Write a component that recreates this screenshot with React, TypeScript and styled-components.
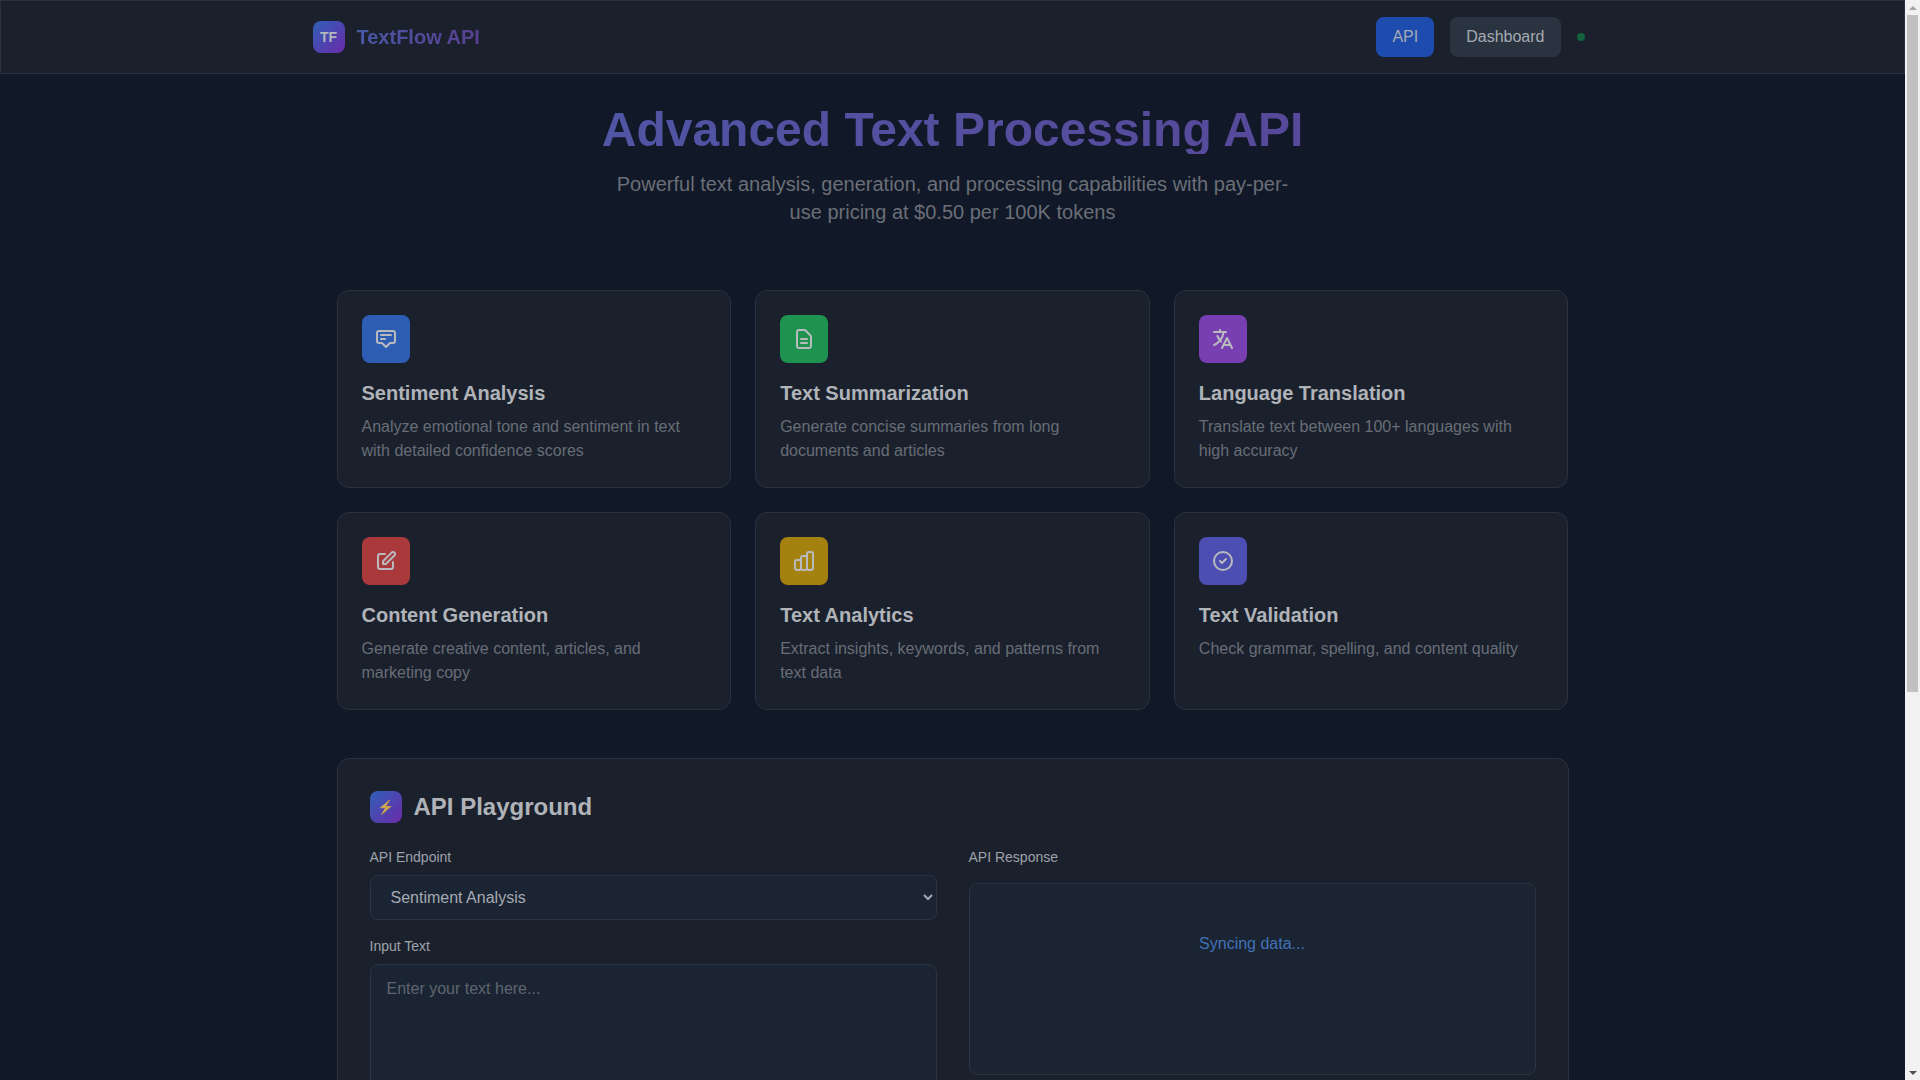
import React from 'react'
import styled, { createGlobalStyle } from 'styled-components'

const GlobalStyle = createGlobalStyle`
  * {
    box-sizing: border-box;
  }
  body {
    margin: 0;
    background: #111827;
    font-family: "Liberation Sans", Arial, sans-serif;
  }
`

const features = [
  {
    title: 'Sentiment Analysis',
    text: 'Analyze emotional tone and sentiment in text with detailed confidence scores',
    color: '#2d5eb4',
    icon: 'M7 8h10M7 12h4m1 8l-4-4H5a2 2 0 01-2-2V6a2 2 0 012-2h14a2 2 0 012 2v8a2 2 0 01-2 2h-3l-4 4z',
  },
  {
    title: 'Text Summarization',
    text: 'Generate concise summaries from long documents and articles',
    color: '#1e9350',
    icon: 'M9 12h6m-6 4h6m2 5H7a2 2 0 01-2-2V5a2 2 0 012-2h5.586a1 1 0 01.707.293l5.414 5.414a1 1 0 01.293.707V19a2 2 0 01-2 2z',
  },
  {
    title: 'Language Translation',
    text: 'Translate text between 100+ languages with high accuracy',
    color: '#783fb2',
    icon: 'M3 5h12M9 3v2m1.048 9.5A18.022 18.022 0 016.412 9m6.088 9h7M11 21l5-10 5 10M12.751 5C11.783 10.77 8.07 15.61 3 18.129',
  },
  {
    title: 'Content Generation',
    text: 'Generate creative content, articles, and marketing copy',
    color: '#a9393b',
    icon: 'M11 5H6a2 2 0 00-2 2v11a2 2 0 002 2h11a2 2 0 002-2v-5m-1.414-9.414a2 2 0 112.828 2.828L11.828 15H9v-2.828l8.586-8.586z',
  },
  {
    title: 'Text Analytics',
    text: 'Extract insights, keywords, and patterns from text data',
    color: '#a5810f',
    icon: 'M9 19v-6a2 2 0 00-2-2H5a2 2 0 00-2 2v6a2 2 0 002 2h2a2 2 0 002-2zm0 0V9a2 2 0 012-2h2a2 2 0 012 2v10m-6 0a2 2 0 002 2h2a2 2 0 002-2m0 0V5a2 2 0 012-2h2a2 2 0 012 2v14a2 2 0 01-2 2h-2a2 2 0 01-2-2z',
  },
  {
    title: 'Text Validation',
    text: 'Check grammar, spelling, and content quality',
    color: '#4d4eb2',
    icon: 'M9 12l2 2 4-4m6 2a9 9 0 11-18 0 9 9 0 0118 0z',
  },
]

export default function App() {
  return (
    <Shell>
      <GlobalStyle />
      <Page>
        <Nav>
          <NavInner>
            <Brand>
              <Logo>TF</Logo>
              <BrandName>TextFlow API</BrandName>
            </Brand>
            <NavActions>
              <NavButton $active>API</NavButton>
              <NavButton>Dashboard</NavButton>
              <StatusDot />
            </NavActions>
          </NavInner>
        </Nav>

        <Main>
          <Hero>
            <HeroTitle>Advanced Text Processing API</HeroTitle>
            <HeroText>
              Powerful text analysis, generation, and processing capabilities with pay-per-use pricing at $0.50 per 100K
              tokens
            </HeroText>
          </Hero>

          <FeatureGrid>
            {features.map((f) => (
              <FeatureCard key={f.title}>
                <FeatureIcon $color={f.color}>
                  <svg width="24" height="24" viewBox="0 0 24 24" fill="none" stroke="currentColor" strokeWidth="2" strokeLinecap="round" strokeLinejoin="round">
                    <path d={f.icon} />
                  </svg>
                </FeatureIcon>
                <FeatureTitle>{f.title}</FeatureTitle>
                <FeatureText>{f.text}</FeatureText>
              </FeatureCard>
            ))}
          </FeatureGrid>

          <Playground>
            <PlaygroundHead>
              <PlaygroundIcon>
                <Bolt>⚡</Bolt>
              </PlaygroundIcon>
              <PlaygroundTitle>API Playground</PlaygroundTitle>
            </PlaygroundHead>
            <Columns>
              <div>
                <Field>
                  <Label htmlFor="endpoint">API Endpoint</Label>
                  <Select id="endpoint" defaultValue="sentiment">
                    <option value="sentiment">Sentiment Analysis</option>
                    <option value="summary">Text Summarization</option>
                    <option value="translate">Language Translation</option>
                  </Select>
                </Field>
                <Field>
                  <Label htmlFor="input">Input Text</Label>
                  <TextArea id="input" placeholder="Enter your text here..." />
                </Field>
              </div>
              <div>
                <ResponseLabel>API Response</ResponseLabel>
                <ResponseBox>
                  <Syncing>Syncing data...</Syncing>
                </ResponseBox>
              </div>
            </Columns>
          </Playground>
        </Main>
      </Page>

      <Scrollbar>
        <ScrollButton>
          <ArrowUp />
        </ScrollButton>
        <ScrollTrack>
          <ScrollThumb />
        </ScrollTrack>
        <ScrollButton>
          <ArrowDown />
        </ScrollButton>
      </Scrollbar>
    </Shell>
  )
}

const Shell = styled.div`
  display: flex;
  align-items: flex-start;
  min-height: 1675px;
`

const Page = styled.div`
  flex: 1;
  min-width: 0;
`

const Scrollbar = styled.div`
  position: sticky;
  top: 0;
  flex: none;
  width: 15px;
  height: 100vh;
  display: flex;
  flex-direction: column;
  background: #f1f1f1;
`

const ScrollButton = styled.div`
  flex: none;
  height: 15px;
  display: flex;
  align-items: center;
  justify-content: center;
`

const ArrowUp = styled.span`
  width: 0;
  height: 0;
  border-left: 4px solid transparent;
  border-right: 4px solid transparent;
  border-bottom: 4px solid #a3a3a3;
`

const ArrowDown = styled.span`
  width: 0;
  height: 0;
  border-left: 4px solid transparent;
  border-right: 4px solid transparent;
  border-top: 4px solid #505050;
`

const ScrollTrack = styled.div`
  flex: 1;
  padding: 0 2px;
`

const ScrollThumb = styled.div`
  height: 677px;
  background: #c1c1c1;
`

const Nav = styled.nav`
  background: #1a212d;
  border: 1px solid #2a3240;
  padding: 16px 0;
`

const NavInner = styled.div`
  width: 1280px;
  margin: 0 auto;
  padding-right: 8px;
  display: flex;
  align-items: center;
  justify-content: space-between;
`

const Brand = styled.div`
  display: flex;
  align-items: center;
  gap: 12px;
`

const Logo = styled.div`
  width: 32px;
  height: 32px;
  border-radius: 8px;
  display: flex;
  align-items: center;
  justify-content: center;
  background: linear-gradient(135deg, #2f60b8, #6b2aa8);
  color: #b4b7be;
  font-size: 14px;
  font-weight: 700;
`

const BrandName = styled.span`
  font-size: 20px;
  line-height: 28px;
  font-weight: 700;
  background: linear-gradient(90deg, #4a58a8, #5a3f90);
  -webkit-background-clip: text;
  background-clip: text;
  color: transparent;
`

const NavActions = styled.div`
  display: flex;
  align-items: center;
  gap: 16px;
`

const NavButton = styled.button<{ $active?: boolean }>`
  height: 40px;
  padding: 0 16px;
  border: 0;
  border-radius: 8px;
  font-family: inherit;
  font-size: 16px;
  background: ${(p) => (p.$active ? '#1e4cae' : '#2a3441')};
  color: #a6aab2;
`

const StatusDot = styled.span`
  width: 8px;
  height: 8px;
  border-radius: 50%;
  background: #15633d;
`

const Main = styled.main`
  width: 1280px;
  margin: 0 auto;
  padding: 32px 24px;
`

const Hero = styled.header`
  margin-bottom: 64px;
  text-align: center;
`

const HeroTitle = styled.h1`
  margin: 0 0 16px;
  font-size: 48px;
  line-height: 48px;
  font-weight: 700;
  background: linear-gradient(90deg, #4d5aa8, #5a4496);
  -webkit-background-clip: text;
  background-clip: text;
  color: transparent;
`

const HeroText = styled.p`
  max-width: 672px;
  margin: 0 auto;
  font-size: 20px;
  line-height: 28px;
  color: #6a6f78;
`

const FeatureGrid = styled.section`
  display: grid;
  grid-template-columns: repeat(3, 1fr);
  gap: 24px;
  margin-bottom: 48px;
`

const FeatureCard = styled.article`
  padding: 24px;
  background: #1a212d;
  border: 1px solid #2a3240;
  border-radius: 12px;
`

const FeatureIcon = styled.div<{ $color: string }>`
  width: 48px;
  height: 48px;
  margin-bottom: 16px;
  border-radius: 8px;
  display: flex;
  align-items: center;
  justify-content: center;
  background: ${(p) => p.$color};
  color: #b8babd;
`

const FeatureTitle = styled.h3`
  margin: 0 0 8px;
  font-size: 20px;
  line-height: 28px;
  font-weight: 700;
  color: #b0b3b8;
`

const FeatureText = styled.p`
  margin: 0;
  font-size: 16px;
  line-height: 24px;
  color: #686d76;
`

const Playground = styled.section`
  padding: 32px;
  background: #1a212d;
  border: 1px solid #2a3240;
  border-radius: 12px;
`

const PlaygroundHead = styled.div`
  display: flex;
  align-items: center;
  gap: 12px;
  margin-bottom: 24px;
`

const PlaygroundIcon = styled.div`
  width: 32px;
  height: 32px;
  border-radius: 8px;
  display: flex;
  align-items: center;
  justify-content: center;
  background: linear-gradient(135deg, #2f60b8, #6b2aa8);
  font-size: 14px;
`

const Bolt = styled.span`
  opacity: 0.7;
`

const PlaygroundTitle = styled.h2`
  margin: 0;
  font-size: 24px;
  line-height: 32px;
  font-weight: 700;
  color: #b0b3b8;
`

const Columns = styled.div`
  display: grid;
  grid-template-columns: 1fr 1fr;
  gap: 32px;
`

const Field = styled.div`
  margin-bottom: 16px;
`

const Label = styled.label`
  display: block;
  margin-bottom: 8px;
  font-size: 14px;
  line-height: 20px;
  color: #9ea2a9;
`

const Select = styled.select`
  display: block;
  width: 100%;
  padding: 12px 16px;
  background: #1a2432;
  border: 1px solid #2a3442;
  border-radius: 8px;
  font-family: inherit;
  font-size: 16px;
  color: #a6aab2;
`

const TextArea = styled.textarea`
  display: block;
  width: 100%;
  height: 160px;
  padding: 12px 16px;
  background: #1a2432;
  border: 1px solid #2a3442;
  border-radius: 8px;
  font-family: inherit;
  font-size: 16px;
  line-height: 24px;
  color: #a6aab2;
  resize: vertical;

  &::placeholder {
    color: #5f6570;
  }
`

const ResponseLabel = styled.div`
  margin-bottom: 16px;
  font-size: 14px;
  line-height: 20px;
  color: #9ea2a9;
`

const ResponseBox = styled.div`
  height: 192px;
  padding: 48px 16px;
  background: #1a2432;
  border: 1px solid #2a3442;
  border-radius: 8px;
  text-align: center;
`

const Syncing = styled.div`
  font-size: 16px;
  line-height: 24px;
  color: #4272b5;
`
